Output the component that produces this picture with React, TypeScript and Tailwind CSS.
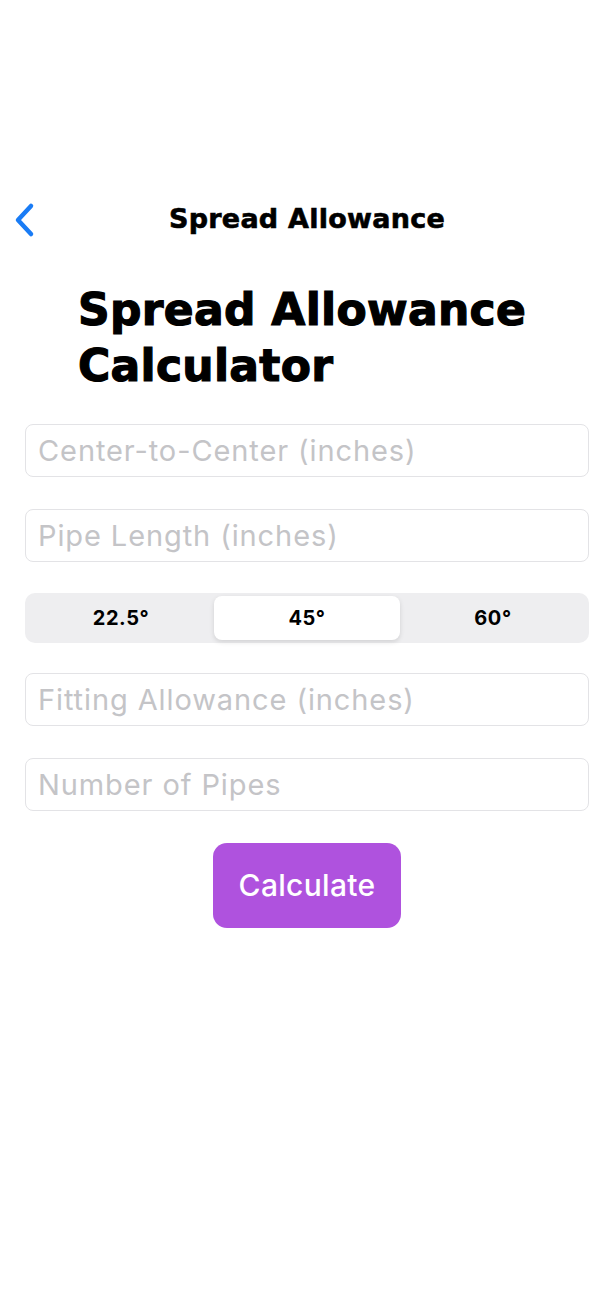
import { useState } from 'react';

const angles = ['22.5°', '45°', '60°'];

const heavy = { fontFamily: '"DejaVu Sans", Inter, sans-serif' };

function Field({ placeholder, className = '' }: { placeholder: string; className?: string }) {
  return (
    <input
      type="text"
      placeholder={placeholder}
      className={
        'block h-[53px] w-full rounded-[8px] border border-[#e3e3e6] bg-white px-[12px] text-[29px] tracking-[0.9px] text-black outline-none placeholder:text-[#c4c4c7] ' +
        className
      }
      style={{ fontFamily: 'Inter, "Noto Sans", sans-serif' }}
    />
  );
}

export default function App() {
  const [angle, setAngle] = useState(1);

  return (
    <main
      className="min-h-[1299px] w-full bg-white pt-[199px]"
      style={{ fontFamily: 'Inter, "Noto Sans", sans-serif' }}
    >
      {/* Nav bar */}
      <div className="relative flex h-[40px] items-center justify-center">
        <button className="absolute left-[12px] top-[3px] text-[#1a7cf5]">
          <svg width="26" height="36" viewBox="0 0 26 36" fill="none">
            <path
              d="M19 4 L6 18 L19 32"
              stroke="currentColor"
              strokeWidth="4.5"
              strokeLinecap="round"
              strokeLinejoin="round"
            />
          </svg>
        </button>
        <h2
          className="ml-[14px] text-[27px] font-bold tracking-[0.25px] text-black [-webkit-text-stroke:0.6px_black]"
          style={heavy}
        >
          Spread Allowance
        </h2>
      </div>

      {/* Big title */}
      <h1
        className="mt-[43px] pl-[78px] text-[44px] font-bold leading-[56px] tracking-[0.3px] text-black [-webkit-text-stroke:1.2px_black]"
        style={heavy}
      >
        Spread Allowance
        <br />
        Calculator
      </h1>

      <div className="mt-[30px] flex flex-col pl-[25px] pr-[11px]">
        <Field placeholder="Center-to-Center (inches)" />
        <Field placeholder="Pipe Length (inches)" className="mt-[32px]" />

        <div className="mt-[31px] flex h-[50px] items-center rounded-[10px] bg-[#eeeef0] p-[3px]">
          {angles.map((a, i) => (
            <button
              key={a}
              onClick={() => setAngle(i)}
              className={
                i === angle
                  ? 'flex h-full flex-1 items-center justify-center rounded-[8px] bg-white text-[20px] font-bold tracking-[0.6px] text-black shadow-[0_2px_5px_rgba(0,0,0,0.12)]'
                  : 'flex h-full flex-1 items-center justify-center rounded-[8px] text-[20px] font-bold tracking-[0.6px] text-black'
              }
            >
              {a}
            </button>
          ))}
        </div>

        <Field placeholder="Fitting Allowance (inches)" className="mt-[30px]" />
        <Field placeholder="Number of Pipes" className="mt-[32px]" />
      </div>

      <div className="mt-[32px] flex justify-center pl-[14px]">
        <button className="h-[85px] w-[188px] rounded-[14px] bg-[#af52de] text-[30px] font-medium tracking-[0.3px] text-white">
          Calculate
        </button>
      </div>
    </main>
  );
}
